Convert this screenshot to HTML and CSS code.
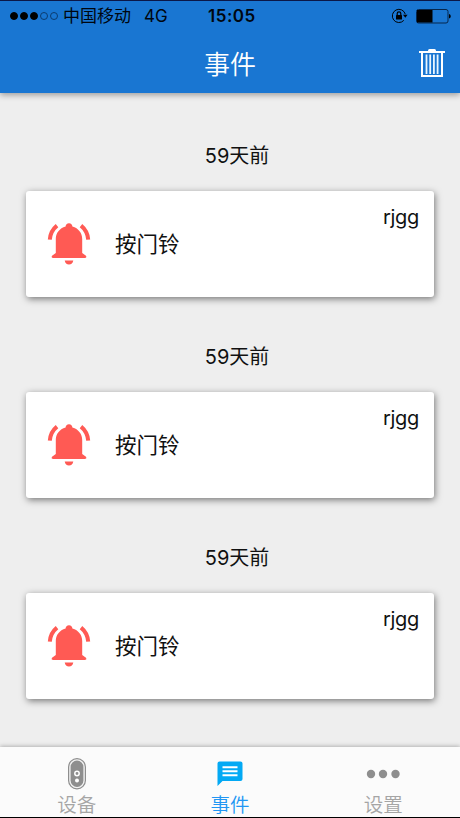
FILE: index.html
```html
<!DOCTYPE html>
<html lang="zh-CN">
<head>
  <meta charset="UTF-8" />
  <meta name="viewport" content="width=device-width, initial-scale=1" />
  <title>事件</title>
  <link rel="stylesheet" href="styles.css">
</head>
<body>
  <!-- shared bell symbol for the event cards -->
  <svg class="symbols" aria-hidden="true">
    <symbol id="bell" viewBox="0 0 44 44">
      <path fill="currentColor" d="M22 1.200c2.100 0 3.300 1.400 3.400 3.400C31.500 6.400 35.200 11 35.200 17V31L39 33.800Q40.200 36 37.500 36H6.500Q3.800 36 5 33.800L8.800 31V17C8.800 11 12.500 6.400 18.600 4.600 18.700 2.600 19.900 1.200 22 1.200ZM17.700 38.500H26.300C25.900 41 24.300 42.500 22 42.500S18.100 41 17.700 38.500Z"/>
      <path fill="none" stroke="currentColor" stroke-width="4" d="M10 3.600Q3.400 9 2.800 17.600M34 3.600Q40.600 9 41.200 17.600"/>
    </symbol>
  </svg>

  <div class="screen">
    <header class="header">
      <div class="status">
        <div class="signal">
          <i class="dot full"></i><i class="dot full"></i><i class="dot full"></i><i class="dot"></i><i class="dot"></i>
        </div>
        <span class="carrier">中国移动</span>
        <span class="network">4G</span>
        <span class="time">15:05</span>
        <svg class="lock" width="17" height="16" viewBox="0 0 17 16">
          <path fill="none" stroke="#000" d="M14.300 6.200A6.600 6.600 0 1 0 12.800 12.400"/>
          <path d="M12 6.700H16.600L14.300 9.800Z"/>
          <rect x="5" y="7" width="6" height="4.600" rx=".5"/>
          <path fill="none" stroke="#000" stroke-width="1.200" d="M6.200 7V5.600a1.800 1.800 0 0 1 3.600 0V7"/>
        </svg>
        <svg class="battery" width="35" height="15" viewBox="0 0 35 15">
          <rect x=".5" y=".5" width="31.500" height="13.500" rx="2" fill="none" stroke="#06264d"/>
          <path d="M1 1H16.500V13.500H1ZM33 5q1.800.5 1.800 2.300T33 9.600Z"/>
        </svg>
      </div>
      <div class="toolbar">
        <h1>事件</h1>
        <svg class="trash" width="26" height="29" viewBox="0 0 26 29">
          <path fill="none" stroke="#fff" stroke-width="2" d="M0 3H26M3 3V27H23V3"/>
          <path fill="none" stroke="#e8f6ff" stroke-width="1.800" d="M7.500 5.500V25M11.200 5.500V25M14.900 5.500V25M18.600 5.500V25"/>
          <path fill="#fff" d="M9 3V1.500Q9 0 10.500 0h5Q17 0 17 1.500V3Z"/>
        </svg>
      </div>
    </header>

    <main class="events">
      <section class="event">
        <div class="date">59天前</div>
        <div class="card">
          <svg class="bell"><use href="#bell"/></svg>
          <span class="label">按门铃</span>
          <span class="device">rjgg</span>
        </div>
      </section>
      <section class="event">
        <div class="date">59天前</div>
        <div class="card">
          <svg class="bell"><use href="#bell"/></svg>
          <span class="label">按门铃</span>
          <span class="device">rjgg</span>
        </div>
      </section>
      <section class="event">
        <div class="date">59天前</div>
        <div class="card">
          <svg class="bell"><use href="#bell"/></svg>
          <span class="label">按门铃</span>
          <span class="device">rjgg</span>
        </div>
      </section>
    </main>

    <nav class="tabs">
      <a class="tab">
        <svg width="18" height="32" viewBox="0 0 18 32">
          <rect x=".6" y=".6" width="16.800" height="30.300" rx="8.400" fill="#f2f2f2" stroke="#8e8e8e" stroke-width="1.200"/>
          <rect x="2.600" y="2.600" width="12.800" height="26.300" rx="6.400" fill="#8e8e8e"/>
          <circle cx="9" cy="15.500" r="2.200" fill="none" stroke="#fff" stroke-width="1.500"/>
          <circle cx="9" cy="22.600" r="2" fill="#fff"/>
        </svg>
        <span>设备</span>
      </a>
      <a class="tab active">
        <svg width="26" height="32" viewBox="0 0 26 32">
          <path fill="#03a9f4" d="M2.500 3.500H23.500Q25.500 3.500 25.500 5.500V21Q25.500 23 23.500 23H5.500L.5 28V5.500Q.5 3.500 2.500 3.500Z"/>
          <path stroke="#fff" stroke-width="2" d="M5.500 9.300H20.500M5.500 13.300H20.500M5.500 17.300H20.500"/>
        </svg>
        <span>事件</span>
      </a>
      <a class="tab">
        <svg width="34" height="32" viewBox="0 0 34 32">
          <g fill="#8e8e8e"><circle cx="5" cy="16" r="4.200"/><circle cx="17" cy="16" r="4.200"/><circle cx="29.500" cy="16" r="4.200"/></g>
        </svg>
        <span>设置</span>
      </a>
    </nav>
  </div>
</body>
</html>
```

FILE: styles.css
```css
* {
  box-sizing: border-box;
}
body {
  margin: 0;
  font-family: Inter, "Noto Sans CJK SC", sans-serif;
  font-weight: 400;
  color: #111;
  background: #eee;
}
h1 {
  margin: 0;
}
svg {
  display: block;
  flex: none;
}
.symbols {
  display: none;
}
.screen {
  display: flex;
  flex-direction: column;
  height: 818px;
  overflow: hidden;
}

/* header */
.header {
  height: 93px;
  flex: none;
  background: #1976d2;
  border-top: 1px solid #0b1748;
  box-shadow: 0 2px 6px rgba(0, 0, 0, 0.35);
}
.status {
  display: flex;
  align-items: center;
  height: 30px;
  padding-left: 10px;
  color: #00060f;
  font-size: 17px;
  line-height: 30px;
  white-space: nowrap;
}
.signal {
  display: flex;
  gap: 2px;
  width: 53px;
}
.dot {
  width: 8px;
  height: 8px;
  border: 1px solid #0b3c70;
  border-radius: 50%;
}
.dot.full {
  background: #000;
  border-color: #000;
}
.carrier {
  width: 81px;
}
.network {
  width: 64px;
  font-size: 17px;
}
.time {
  width: 183px;
  font-size: 17px;
  font-weight: 600;
  letter-spacing: 0.5px;
}
.battery {
  margin-left: 8px;
}
.toolbar {
  display: grid;
  grid-template-columns: 1fr auto 1fr;
  align-items: center;
  height: 62px;
  padding-right: 15px;
}
.toolbar h1 {
  grid-column: 2;
  padding-left: 15px;
  color: #fff;
  font-size: 26px;
  font-weight: 350;
  line-height: 62px;
  margin-top: 3px;
}
.trash {
  justify-self: end;
}

/* event list */
.events {
  flex: 1;
  padding: 36px 26px 0;
}
.event {
  height: 201px;
}
.date {
  height: 62px;
  line-height: 55px;
  text-align: center;
  font-size: 20px;
  padding-left: 14px;
}
.card {
  display: flex;
  align-items: center;
  height: 106px;
  padding: 0 15px 0 21px;
  background: #fff;
  border-radius: 3px;
  box-shadow: 1px 2px 7px rgba(0, 0, 0, 0.5);
}
.bell {
  width: 44px;
  height: 44px;
  color: #ff5a54;
}
.label {
  margin-left: 24px;
  padding-bottom: 4px;
  font-size: 21.5px;
}
.device {
  align-self: flex-start;
  margin-left: auto;
  padding-top: 11px;
  font-size: 20px;
  letter-spacing: -0.3px;
  line-height: 30px;
}

/* bottom tabs */
.tabs {
  display: grid;
  grid-template-columns: repeat(3, 1fr);
  flex: none;
  height: 71px;
  background: #fbfbfb;
  border-bottom: 1px solid #000;
  box-shadow: 0 -1px 4px rgba(0, 0, 0, 0.25);
}
.tab {
  display: flex;
  flex-direction: column;
  align-items: center;
  padding-top: 11px;
  color: #a5a5a5;
  font-size: 19.5px;
  font-weight: 350;
  line-height: 30px;
}
.tab.active {
  color: #2196f3;
}
```
